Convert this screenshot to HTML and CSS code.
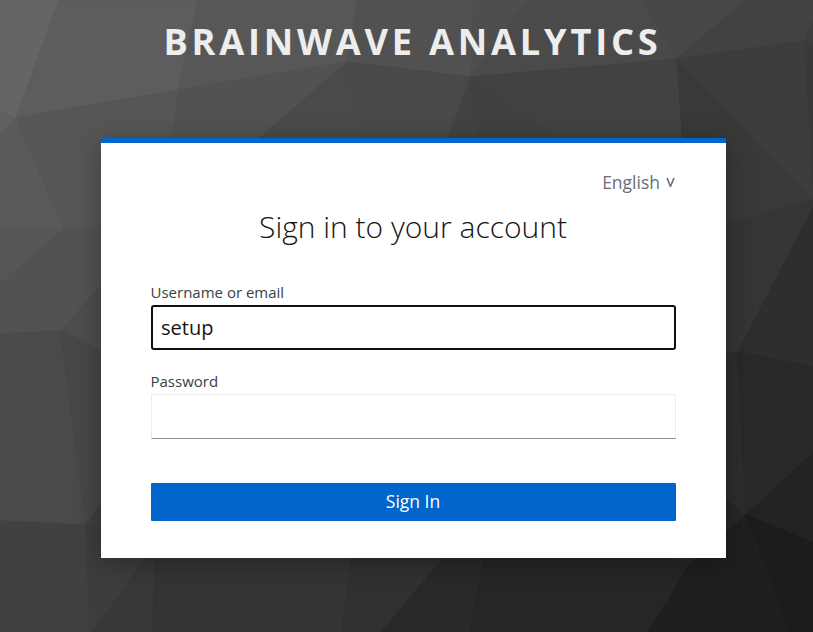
FILE: index.html
```html
<!DOCTYPE html>
<html lang="en">
<head>
<meta charset="utf-8">
<title>Sign in to Brainwave Analytics</title>
<link rel="stylesheet" href="styles.css">
</head>
<body>
<svg class="backdrop" viewBox="0 0 813 632" preserveAspectRatio="none" aria-hidden="true">
  <path fill="#656565" stroke="#656565" d="M0 0H59L16 118L0 112Z"/>
  <path fill="#606060" stroke="#606060" d="M0 112L16 118L0 134Z"/>
  <path fill="#5d5d5d" stroke="#5d5d5d" d="M59 0H198L178 90L16 118Z"/>
  <path fill="#575757" stroke="#575757" d="M198 0H357L347 62L178 90Z"/>
  <path fill="#515151" stroke="#515151" d="M357 0H474L471 77L347 62Z"/>
  <path fill="#4e4e4e" stroke="#4e4e4e" d="M474 0H528L471 77Z"/>
  <path fill="#4a4a4a" stroke="#4a4a4a" d="M528 0H643L677 59L471 77Z"/>
  <path fill="#474747" stroke="#474747" d="M643 0H746L677 59Z"/>
  <path fill="#424242" stroke="#424242" d="M746 0H813V22L804 41L677 59Z"/>
  <path fill="#3e3e3e" stroke="#3e3e3e" d="M813 22V47L804 41Z"/>
  <path fill="#393939" stroke="#393939" d="M813 47V200L804 41Z"/>
  <path fill="#565656" stroke="#565656" d="M16 118L178 90L166 200L101 175Z"/>
  <path fill="#525252" stroke="#525252" d="M178 90L347 62L200 190H166Z"/>
  <path fill="#4a4a4a" stroke="#4a4a4a" d="M347 62L200 190H373Z"/>
  <path fill="#494949" stroke="#494949" d="M347 62L471 77L428 190H373Z"/>
  <path fill="#434343" stroke="#434343" d="M471 77L428 190H480Z"/>
  <path fill="#414141" stroke="#414141" d="M471 77L480 190H630Z"/>
  <path fill="#424242" stroke="#424242" d="M471 77L677 59L686 190H630Z"/>
  <path fill="#393939" stroke="#393939" d="M677 59L813 200L726 224L686 190Z"/>
  <path fill="#3d3d3d" stroke="#3d3d3d" d="M677 59L804 41L813 200Z"/>
  <path fill="#5a5a5a" stroke="#5a5a5a" d="M0 134L16 118L64 229L0 230Z"/>
  <path fill="#565656" stroke="#565656" d="M16 118L101 175V226L64 229Z"/>
  <path fill="#565656" stroke="#565656" d="M0 230L64 229L0 284Z"/>
  <path fill="#525252" stroke="#525252" d="M64 229L61 331L0 334V284Z"/>
  <path fill="#525252" stroke="#525252" d="M64 229L101 226V285L61 331Z"/>
  <path fill="#4d4d4d" stroke="#4d4d4d" d="M101 285V350L61 331Z"/>
  <path fill="#4a4a4a" stroke="#4a4a4a" d="M0 334L61 331L86 525L0 521Z"/>
  <path fill="#474747" stroke="#474747" d="M61 331L101 350V504L86 524Z"/>
  <path fill="#3f3f3f" stroke="#3f3f3f" d="M101 504V529L86 524Z"/>
  <path fill="#414141" stroke="#414141" d="M0 521L86 525L90 632H0Z"/>
  <path fill="#3d3d3d" stroke="#3d3d3d" d="M86 525L101 529L155 545L93 632H90Z"/>
  <path fill="#383838" stroke="#383838" d="M165 545H155L93 632H154Z"/>
  <path fill="#343434" stroke="#343434" d="M155 545H353L342 632H153Z"/>
  <path fill="#313131" stroke="#313131" d="M353 545H454L381 632H342Z"/>
  <path fill="#292929" stroke="#292929" d="M454 545H487L470 632H381Z"/>
  <path fill="#262626" stroke="#262626" d="M487 545H640L689 565L648 632H470Z"/>
  <path fill="#292929" stroke="#292929" d="M640 545H700V556L689 565Z"/>
  <path fill="#353535" stroke="#353535" d="M720 226L813 200V208L738 352L720 355Z"/>
  <path fill="#2e2e2e" stroke="#2e2e2e" d="M813 208V367L738 352Z"/>
  <path fill="#2d2d2d" stroke="#2d2d2d" d="M720 355L738 352L746 515L720 496Z"/>
  <path fill="#292929" stroke="#292929" d="M738 352L813 367V453L746 515Z"/>
  <path fill="#272727" stroke="#272727" d="M720 496L746 515L720 537Z"/>
  <path fill="#222" stroke="#222" d="M746 515L813 453V543Z"/>
  <path fill="#1c1c1c" stroke="#1c1c1c" d="M746 515L813 543V632H789Z"/>
  <path fill="#1f1f1f" stroke="#1f1f1f" d="M746 515L789 632H648L689 565Z"/>
</svg>
<div class="page">
  <header class="brand">Brainwave Analytics</header>
  <main class="card">
    <div class="locale"><a class="locale-link" href="#">English</a><svg class="chevron" viewBox="0 0 9 9"><path d="M1 0L4.5 8.5L8 0"/></svg></div>
    <h1 class="heading">Sign in to your account</h1>
    <form class="form">
      <label class="label" for="username">Username or email</label>
      <input class="input input-active" id="username" type="text" value="setup">
      <label class="label label-password" for="password">Password</label>
      <input class="input" id="password" type="password">
      <button class="submit" type="button">Sign In</button>
    </form>
  </main>
</div>
</body>
</html>
```
FILE: styles.css
```css
* { box-sizing: border-box; }
body {
  margin: 0;
  height: 632px;
  overflow: hidden;
  background: #393939;
  font-family: "Open Sans", sans-serif;
}
.backdrop {
  position: absolute;
  inset: 0;
  width: 100%;
  height: 100%;
  z-index: -1;
}
.backdrop path { stroke-width: 1; }
.page { padding-left: 101px; }
.brand {
  width: 623px;
  height: 138px;
  padding-top: 17px;
  color: #ededed;
  font-size: 36.25px;
  font-weight: 700;
  line-height: 49px;
  letter-spacing: 3.75px;
  text-align: center;
  text-transform: uppercase;
  white-space: nowrap;
}
.card {
  width: 625px;
  height: 420px;
  padding: 25px 50px 0;
  border-top: 5px solid #06c;
  background: #fff;
  box-shadow: 0 5px 25px rgba(3, 3, 3, 0.3);
}
.locale {
  display: flex;
  justify-content: flex-end;
  height: 28px;
  padding-right: 1px;
  line-height: 28px;
  font-size: 17.5px;
}
.locale-link { color: #6a6e73; text-decoration: none; }
.chevron {
  width: 9px;
  height: 9px;
  margin: 10px 0 0 6px;
  fill: none;
  stroke: #6a6e73;
  stroke-width: 1.6;
}
.heading {
  margin: 11px 1px 0 0;
  color: #151515;
  font-size: 30px;
  font-weight: 300;
  line-height: 39px;
  text-align: center;
  white-space: nowrap;
}
.form { display: flex; flex-direction: column; padding-top: 35px; }
.label {
  height: 23px;
  margin-bottom: 1px;
  color: #393f44;
  font-size: 15px;
  line-height: 23px;
  text-indent: -0.5px;
}
.label-password { margin-top: 20px; }
.input {
  width: 525px;
  height: 45px;
  padding: 0 10px;
  border: 1px solid #ededed;
  border-bottom-color: #8a8d90;
  border-radius: 0;
  background: #fff;
  color: #151515;
  font: 20px/30px "Open Sans", sans-serif;
  outline: none;
}
.input-active { padding: 0 8px; border: 2px solid #101010; border-radius: 3px; }
.submit {
  height: 38px;
  margin-top: 44px;
  padding: 0 1px 2px 0;
  border: 0;
  border-radius: 1px;
  background: #06c;
  color: #fff;
  font: 17.5px/36px "Open Sans", sans-serif;
}
```
